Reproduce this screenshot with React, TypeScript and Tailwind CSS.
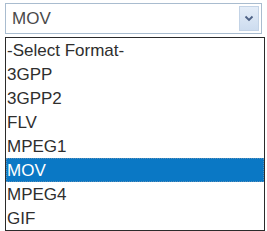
const FORMATS = ['-Select Format-', '3GPP', '3GPP2', 'FLV', 'MPEG1', 'MOV', 'MPEG4', 'GIF'];

export default function App() {
  const selected = 'MOV';

  return (
    <div className="w-[267px] h-[231px] bg-white pt-[3px] pl-[5px] font-['Liberation_Sans',Arial,sans-serif]">
      <div className="w-[257px] h-[31px] border border-[#a9bccf] bg-white flex items-center justify-between pl-[6px] pr-[2px]">
        <span className="text-[17px] text-[#4a4a4a] leading-none">{selected}</span>
        <div className="w-[20px] h-[25px] border border-[#c3d3e6] bg-gradient-to-b from-[#e4edf8] to-[#cddcef] flex items-center justify-center">
          <svg width="10" height="7" viewBox="0 0 10 7">
            <path d="M1.5 1.5 L5 5 L8.5 1.5" fill="none" stroke="#4d6185" strokeWidth="1.8" />
          </svg>
        </div>
      </div>
      <ul className="mt-[3px] w-[260px] border border-[#2b2b2b] bg-white">
        {FORMATS.map((f) => (
          <li
            key={f}
            className={
              f === selected
                ? 'h-[24px] flex items-center px-[1px] text-[17px] leading-none bg-[#0a78c5] text-white outline-1 outline-dotted outline-offset-[-1px] outline-[#5a8fb8]'
                : 'h-[24px] flex items-center px-[1px] text-[17px] leading-none text-[#2e2e2e]'
            }
          >
            {f}
          </li>
        ))}
      </ul>
    </div>
  );
}
